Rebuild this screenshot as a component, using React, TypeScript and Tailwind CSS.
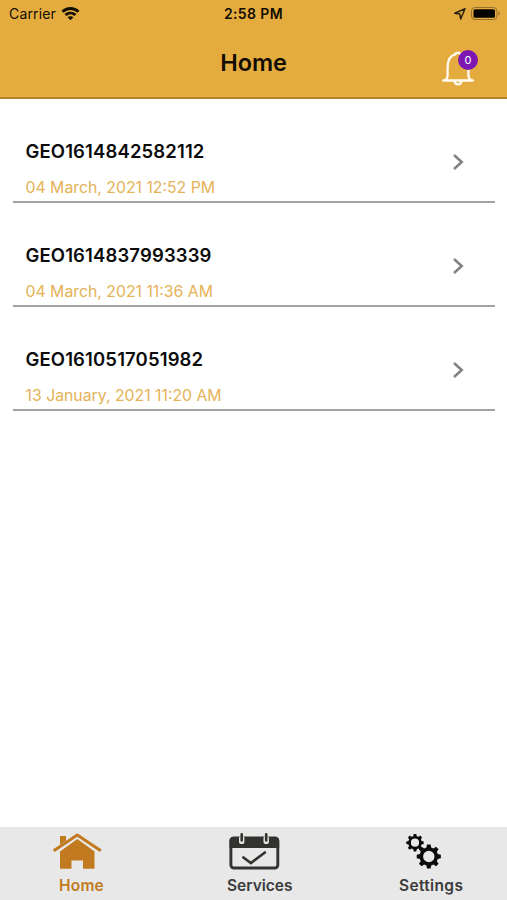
import React from "react";

const items = [
  { id: "GEO1614842582112", date: "04 March, 2021 12:52 PM" },
  { id: "GEO1614837993339", date: "04 March, 2021 11:36 AM" },
  { id: "GEO1610517051982", date: "13 January, 2021 11:20 AM" },
];

function gearPath(cx: number, cy: number, outer: number, root: number, hole: number) {
  const step = Math.PI / 4;
  const parts: string[] = [];
  for (let i = 0; i < 8; i++) {
    const a = i * step;
    const corners: [number, number][] = [
      [root, a - 0.26],
      [outer, a - 0.15],
      [outer, a + 0.15],
      [root, a + 0.26],
    ];
    for (const [r, t] of corners) {
      parts.push(`${(cx + r * Math.cos(t)).toFixed(2)} ${(cy + r * Math.sin(t)).toFixed(2)}`);
    }
  }
  return `M${parts.join("L")}ZM${cx - hole} ${cy}a${hole} ${hole} 0 1 0 ${hole * 2} 0a${hole} ${hole} 0 1 0 ${-hole * 2} 0Z`;
}

function WifiIcon() {
  return (
    <svg className="ml-[5px] h-[14px] w-[19px]" viewBox="0 0 18 14" fill="none" stroke="#120d02" strokeWidth="2.8">
      <path d="M1 4.700C5.500.4 12.500.4 17 4.700" />
      <path d="M4 8.100C6.900 5.400 11.100 5.400 14 8.100" />
      <path d="M6.100 10.300C7.700 8.800 10.300 8.800 11.900 10.300L9 13.200Z" fill="#120d02" stroke="none" />
    </svg>
  );
}

function BellIcon() {
  return (
    <svg className="h-[36px] w-[33px]" viewBox="0 0 33 36" fill="none" stroke="#fffaf0" strokeWidth="2.300" strokeLinecap="round">
      <path d="M1.200 30.500H31M2.500 30.300C4.700 29.500 5.600 28 5.600 25V17.500C5.600 10 8.500 5.500 13.500 4.200M18.500 4.200C23.500 5.500 26.400 10 26.400 17.500V25C26.400 28 27.300 29.500 29.500 30.300" />
      <path d="M12.800 4.300L14.500 2.900H17.500L19.200 4.300" strokeLinejoin="round" />
      <path d="M12.500 31.200C12.800 35.300 19.200 35.300 19.500 31.200" />
    </svg>
  );
}

function HomeIcon() {
  return (
    <svg className="h-[38px] w-[50px]" viewBox="0 0 50 38">
      <g fill="#c17a20">
        <path d="M8 4H14V8.500L8 13Z" />
        <path d="M8 19.500L25.300 7L42.500 19.500V36.800H31V28.500H19.500V36.800H8Z" />
      </g>
      <path d="M1.700 18.700L25.300 3L48.800 18.700" fill="none" stroke="#c17a20" strokeWidth="3" strokeLinejoin="round" />
    </svg>
  );
}

function CalendarIcon() {
  return (
    <svg className="h-[38px] w-[51px]" viewBox="-1 0 51 38">
      <rect x="0.900" y="6" width="46.900" height="30" rx="3" fill="none" stroke="#32322e" strokeWidth="2.900" />
      <path d="M-.5 9a4 4 0 0 1 4-4H45.200a4 4 0 0 1 4 4V16H-.5Z" fill="#32322e" />
      <rect x="9" y="4" width="5.400" height="8" rx="2" fill="#e8e8e8" />
      <rect x="33.500" y="4" width="5.400" height="8" rx="2" fill="#e8e8e8" />
      <path d="M11.700 2.300V8.500M36.200 2.300V8.500" stroke="#32322e" strokeWidth="2.600" strokeLinecap="round" />
      <path d="M13.400 25.500L20.900 31L34.900 20.500" fill="none" stroke="#32322e" strokeWidth="2.700" strokeLinecap="round" />
    </svg>
  );
}

function GearsIcon() {
  return (
    <svg className="h-[38px] w-[36px]" viewBox="0 0 36 38" fill="#0b0b0b" fillRule="evenodd">
      <path d={gearPath(9, 10.7, 8.8, 6.8, 4.1)} />
      <path d={gearPath(22.8, 24.5, 12.2, 9.3, 5.7)} />
    </svg>
  );
}

export default function App() {
  return (
    <div className="flex h-[900px] w-[507px] flex-col overflow-hidden bg-white font-['Inter','Liberation_Sans',sans-serif]">
      <header className="h-[99px] shrink-0 border-b-2 border-[#b48427] bg-[#e4ac3f] text-[#120d02]">
        <div className="grid h-7 grid-cols-3 items-center">
          <div className="flex items-center pl-[9px] text-[14px] leading-7">
            <span className="tracking-[0.15px]">Carrier</span>
            <WifiIcon />
          </div>
          <div className="text-center text-[14px] leading-7 font-semibold tracking-[0.4px]">2:58 PM</div>
          <div className="flex items-center justify-end pr-[6px]">
            <svg className="h-[14px] w-[48px]" viewBox="0 0 48 14">
              <path d="M1.800 6.300L12 1.800L7.700 12L6.800 7Z" fill="none" stroke="#2c2109" strokeWidth="1.500" strokeLinejoin="round" />
              <rect x="18.500" y="0.500" width="25.500" height="12" rx="3.500" fill="none" stroke="#947029" />
              <rect x="20.500" y="2.200" width="21.500" height="8.600" rx="1.500" fill="#050400" />
              <path d="M45.500 4.500V8.500C47.300 8 47.300 5 45.500 4.500Z" fill="#947029" />
            </svg>
          </div>
        </div>
        <div className="grid h-[69px] grid-cols-3">
          <h1 className="col-start-2 text-center text-[23.5px] leading-[69px] font-semibold tracking-[-0.1px]">Home</h1>
          <div className="flex justify-end pt-[22px] pr-[32px]">
            <div className="relative h-[36px] w-[33px]">
              <BellIcon />
              <span className="absolute top-0 left-[16px] h-[20px] w-[20px] rounded-full bg-[#7d17b1] text-center text-[11px] leading-[20px] text-white">0</span>
            </div>
          </div>
        </div>
      </header>

      <main className="flex-1 pr-3 pl-[13px]">
        {items.map((item) => (
          <div key={item.id} className="flex h-[104px] justify-between border-b-2 border-[#a0a3a2] pr-[30px] pl-[12.5px]">
            <div className="pt-[40px]">
              <div className="text-[18.5px] leading-6 font-semibold tracking-[0.13px] text-[#0c0c0c]">{item.id}</div>
              <div className="mt-[13px] text-[15.8px] leading-6 text-[#e5b258]">{item.date}</div>
            </div>
            <svg className="mt-[54px] h-[18px] w-[13px]" viewBox="0 0 13 18" fill="none" stroke="#838383" strokeWidth="2.600">
              <path d="M2 2L9.700 9L2 16" />
            </svg>
          </div>
        ))}
      </main>

      <nav className="grid h-[73px] shrink-0 grid-cols-3 bg-[#e8e8e8] text-[15.5px] leading-5 font-semibold text-[#3a3a3a]">
        <div className="flex flex-col pt-[5px] pl-[52px]">
          <HomeIcon />
          <span className="mt-[6px] ml-[7px] tracking-[0.2px] text-[#c17a20]">Home</span>
        </div>
        <div className="flex flex-col pt-[5px] pl-[60px]">
          <CalendarIcon />
          <span className="mt-[6px] -ml-[2px]">Services</span>
        </div>
        <div className="flex flex-col pt-[5px] pl-[68px]">
          <GearsIcon />
          <span className="mt-[6px] -ml-[7px] tracking-[0.35px]">Settings</span>
        </div>
      </nav>
    </div>
  );
}
